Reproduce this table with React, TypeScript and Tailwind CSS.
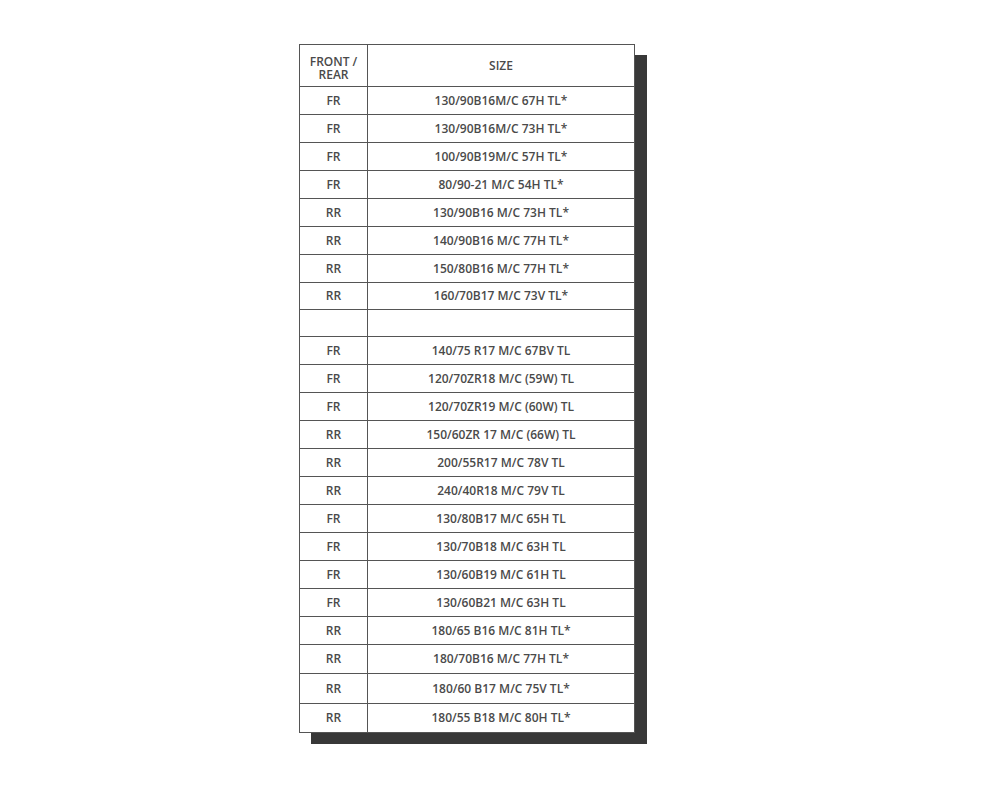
const rows: { pos: string; size: string; h: string }[] = [
  { pos: 'FR', size: '130/90B16M/C 67H TL*', h: 'h-[28px]' },
  { pos: 'FR', size: '130/90B16M/C 73H TL*', h: 'h-[28px]' },
  { pos: 'FR', size: '100/90B19M/C 57H TL*', h: 'h-[28px]' },
  { pos: 'FR', size: '80/90-21 M/C 54H TL*', h: 'h-[28px]' },
  { pos: 'RR', size: '130/90B16 M/C 73H TL*', h: 'h-[28px]' },
  { pos: 'RR', size: '140/90B16 M/C 77H TL*', h: 'h-[28px]' },
  { pos: 'RR', size: '150/80B16 M/C 77H TL*', h: 'h-[28px]' },
  { pos: 'RR', size: '160/70B17 M/C 73V TL*', h: 'h-[27px]' },
  { pos: '', size: '', h: 'h-[27px]' },
  { pos: 'FR', size: '140/75 R17 M/C 67BV TL', h: 'h-[28px]' },
  { pos: 'FR', size: '120/70ZR18 M/C (59W) TL', h: 'h-[28px]' },
  { pos: 'FR', size: '120/70ZR19 M/C (60W) TL', h: 'h-[28px]' },
  { pos: 'RR', size: '150/60ZR 17 M/C (66W) TL', h: 'h-[28px]' },
  { pos: 'RR', size: '200/55R17 M/C 78V TL', h: 'h-[28px]' },
  { pos: 'RR', size: '240/40R18 M/C 79V TL', h: 'h-[28px]' },
  { pos: 'FR', size: '130/80B17 M/C 65H TL', h: 'h-[28px]' },
  { pos: 'FR', size: '130/70B18 M/C 63H TL', h: 'h-[28px]' },
  { pos: 'FR', size: '130/60B19 M/C 61H TL', h: 'h-[28px]' },
  { pos: 'FR', size: '130/60B21 M/C 63H TL', h: 'h-[28px]' },
  { pos: 'RR', size: '180/65 B16 M/C 81H TL*', h: 'h-[28px]' },
  { pos: 'RR', size: '180/70B16 M/C 77H TL*', h: 'h-[29px]' },
  { pos: 'RR', size: '180/60 B17 M/C 75V TL*', h: 'h-[30px]' },
  { pos: 'RR', size: '180/55 B18 M/C 80H TL*', h: 'h-[29px]' },
];

export default function App() {
  return (
    <div
      className="min-h-screen w-full bg-white pt-[44px] pl-[299px] text-[#4a4a4a]"
      style={{ fontFamily: "'Open Sans', sans-serif" }}
    >
      <div className="w-[336px] bg-white shadow-[12px_11px_0_0_#383838]">
        <table className="w-full border-collapse text-[12px] leading-[14px] font-semibold">
          <thead>
            <tr className="h-[42px]">
              <th className="w-[68px] border border-[#555] pt-[4px] pb-0 px-0 font-semibold text-center align-middle">
                <div className="leading-[13px]">FRONT /</div>
                <div className="leading-[13px]">REAR</div>
              </th>
              <th className="border border-[#555] font-semibold text-center align-middle">SIZE</th>
            </tr>
          </thead>
          <tbody>
            {rows.map((r, i) => (
              <tr key={i} className={r.h}>
                <td className="border border-[#555] text-center align-middle p-0">{r.pos}</td>
                <td className="border border-[#555] text-center align-middle p-0">{r.size}</td>
              </tr>
            ))}
          </tbody>
        </table>
      </div>
    </div>
  );
}
